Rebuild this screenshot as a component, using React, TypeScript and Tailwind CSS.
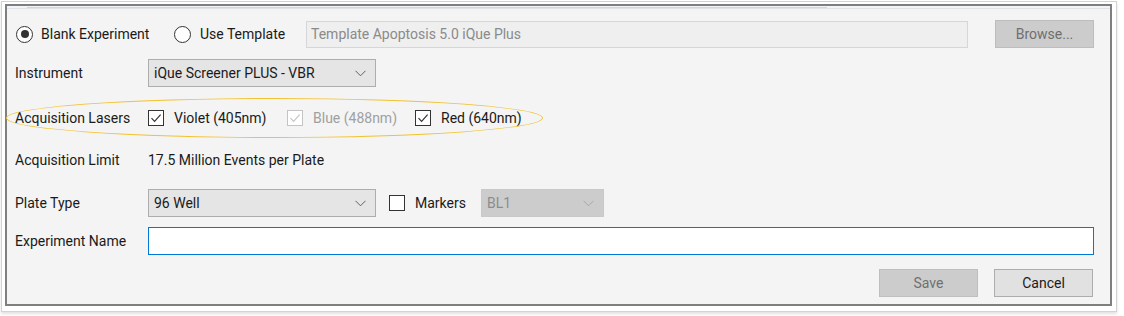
import React from "react";

// -----------------------------------
//            small controls
// -----------------------------------
function Radio({ checked }: { checked?: boolean }) {
  return (
    <span className="flex h-[17px] w-[17px] flex-none items-center justify-center rounded-full border border-[#333333] bg-white">
      {checked && <span className="h-[8px] w-[8px] rounded-full bg-[#333333]" />}
    </span>
  );
}

function Check({ checked, disabled }: { checked?: boolean; disabled?: boolean }) {
  const c = disabled ? "#c4c4c4" : "#333333";
  return (
    <span
      className={`flex h-[16px] w-[16px] flex-none items-center justify-center border bg-white ${
        disabled ? "border-[#c4c4c4]" : "border-[#333333]"
      }`}
    >
      {checked && (
        <svg width="14" height="14" viewBox="0 0 14 14">
          <path d="M2.5 7.2 L5.6 10.3 L11.6 3.6" fill="none" stroke={c} strokeWidth="1.2" />
        </svg>
      )}
    </span>
  );
}

function Chevron({ color = "#5f5f5f" }: { color?: string }) {
  return (
    <svg width="11" height="7" viewBox="0 0 11 7" className="flex-none">
      <path d="M0.5 0.8 L5.5 5.8 L10.5 0.8" fill="none" stroke={color} strokeWidth="1" />
    </svg>
  );
}

function Select({ text, width, disabled }: { text: string; width: string; disabled?: boolean }) {
  return (
    <div
      className={`flex h-[28px] items-center justify-between border pl-[5px] pr-[9px] ${width} ${
        disabled
          ? "border-[#c9c9c9] bg-[#cccccc] text-[#8c8c8c]"
          : "border-[#adadad] bg-[#e5e5e5] text-[#1a1a1a]"
      }`}
    >
      <span>{text}</span>
      <Chevron color={disabled ? "#a8a8a8" : "#5f5f5f"} />
    </div>
  );
}

const lasers = [
  { label: "Violet (405nm)", checked: true, disabled: false, w: "w-[139px]" },
  { label: "Blue (488nm)", checked: true, disabled: true, w: "w-[128px]" },
  { label: "Red (640nm)", checked: true, disabled: false, w: "w-[120px]" },
];

export default function App() {
  return (
    <div className="h-[316px] w-[1124px] bg-white text-[14px] text-[#1a1a1a] [font-family:Roboto,'Liberation_Sans',sans-serif]">
      <div className="ml-[1px] mt-[1px] h-[311px] w-[1116px] border border-[#d2d2d2] bg-white pl-[3px] pt-[2px] shadow-[0_2px_3px_rgba(0,0,0,0.12)]">
        <div className="relative h-[302px] w-[1107px] border-2 border-[#7f7f7f] bg-[#f4f4f4]">
          {/* top strip */}
          <div className="flex h-[3px] border-b border-[#dde4ec]">
            <div className="ml-[20px] w-[800px] border-b border-[#d6d6d6]" />
          </div>

          <div className="flex flex-col pl-[8px] pr-[16px]">
            {/* template row */}
            <div className="mt-[11px] flex h-[28px] items-center">
              <div className="ml-[1px] flex w-[158px] items-center gap-[8px]">
                <Radio checked />
                <span>Blank Experiment</span>
              </div>
              <div className="flex w-[132px] items-center gap-[9px]">
                <Radio />
                <span>Use Template</span>
              </div>
              <div className="flex h-[27px] flex-1 items-center border border-[#d6d6d6] bg-[#efefef] pl-[4px] text-[#8a8a8a]">
                Template Apoptosis 5.0 iQue Plus
              </div>
              <div className="ml-[27px] flex h-[28px] w-[99px] items-center justify-center border border-[#bdbdbd] bg-[#cccccc] text-[#6f6f6f]">
                Browse...
              </div>
            </div>

            {/* instrument */}
            <div className="mt-[11px] flex h-[28px] items-center">
              <span className="w-[133px]">Instrument</span>
              <Select text="iQue Screener PLUS - VBR" width="w-[228px]" />
            </div>

            {/* lasers */}
            <div className="relative mt-[17px] flex h-[28px] items-center">
              <span className="w-[133px]">Acquisition Lasers</span>
              {lasers.map((l) => (
                <div key={l.label} className={`flex items-center gap-[10px] ${l.w}`}>
                  <Check checked={l.checked} disabled={l.disabled} />
                  <span className={l.disabled ? "text-[#a0a0a0]" : ""}>{l.label}</span>
                </div>
              ))}
              <div className="pointer-events-none absolute left-[-9px] top-[-6px] h-[40px] w-[537px] rounded-[50%] border-[1.5px] border-[#f2c233]" />
            </div>

            {/* limit */}
            <div className="mt-[14px] flex h-[28px] items-center">
              <span className="w-[133px]">Acquisition Limit</span>
              <span>17.5 Million Events per Plate</span>
            </div>

            {/* plate type */}
            <div className="mt-[15px] flex h-[28px] items-center">
              <span className="w-[133px]">Plate Type</span>
              <Select text="96 Well" width="w-[228px]" />
              <div className="ml-[13px] flex items-center gap-[10px]">
                <Check />
                <span>Markers</span>
              </div>
              <div className="ml-[15px]">
                <Select text="BL1" width="w-[123px]" disabled />
              </div>
            </div>

            {/* name */}
            <div className="mt-[10px] flex h-[28px] items-center">
              <span className="w-[133px]">Experiment Name</span>
              <div className="h-[28px] flex-1 border border-[#0078d7] bg-white" />
            </div>

            {/* buttons */}
            <div className="mt-[14px] flex h-[28px] items-center justify-end gap-[16px] pr-[1px]">
              <div className="flex h-[28px] w-[99px] items-center justify-center border border-[#bfbfbf] bg-[#cccccc] text-[#707070]">
                Save
              </div>
              <div className="flex h-[28px] w-[99px] items-center justify-center border border-[#adadad] bg-[#e1e1e1]">
                Cancel
              </div>
            </div>
          </div>
        </div>
      </div>
    </div>
  );
}
